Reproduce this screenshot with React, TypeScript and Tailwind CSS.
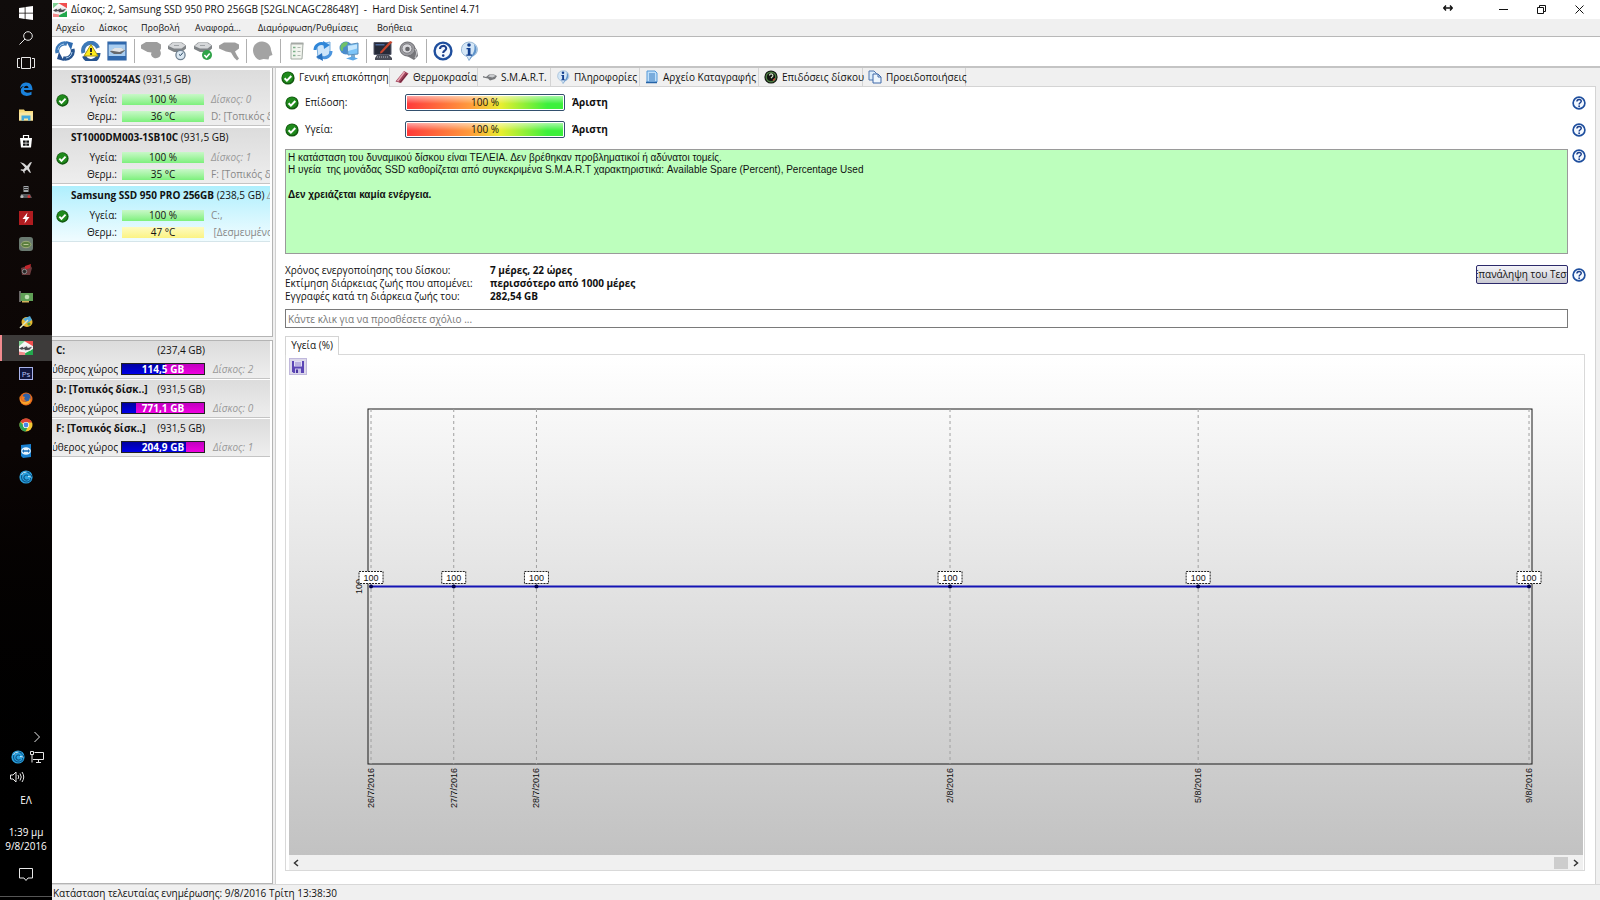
import React, { useState } from 'react';

interface IconProps {
  className?: string;
}

const CheckIcon: React.FC<IconProps> = ({ className = 'w-[14px] h-[14px]' }) => (
  <svg viewBox="0 0 14 14" className={`shrink-0 ${className}`}>
    <circle cx="7" cy="7" r="6.6" fill="#12590f" />
    <circle cx="6.8" cy="6.6" r="5.4" fill="#1f8a1c" />
    <path d="M3.6 7.2l2.3 2.4 4.4-4.6" fill="none" stroke="#fff" strokeWidth="2" />
  </svg>
);

const HelpIcon: React.FC<IconProps> = ({ className = 'w-[14px] h-[14px]' }) => (
  <svg viewBox="0 0 20 20" className={`shrink-0 ${className}`}>
    <circle cx="10" cy="10" r="8.4" fill="#f4f9ff" stroke="#1f4f9e" strokeWidth="2.4" />
    <path d="M7 8c0-4 6.2-4 6.2-.6 0 2.2-3 2.3-3 4.6" fill="none" stroke="#1b3f8c" strokeWidth="2.1" />
    <circle cx="10.2" cy="14.6" r="1.3" fill="#1b3f8c" />
  </svg>
);

const InfoIcon: React.FC<IconProps> = ({ className = 'w-5 h-5' }) => (
  <svg viewBox="0 0 20 20" className={`shrink-0 ${className}`}>
    <path d="M10 1a8.5 7.5 0 0 1 3 14.5L10 19.5l-2-4A8.5 7.5 0 0 1 10 1z" fill="#d4e6f6" stroke="#9ab9d6" />
    <path d="M15 3a7.5 7.5 0 0 1-2 12.5l-3 4c2-6 7-8 5-16.5z" fill="#5f93ca" />
    <circle cx="10" cy="4" r="1.8" fill="#123f8f" />
    <path d="M7.5 7h4v6.5h1.500v1.200H7.300v-1.200h1.500V8.200H7.500z" fill="#123f8f" />
  </svg>
);

const RefreshIcon: React.FC<IconProps> = ({ className = 'w-5 h-5' }) => (
  <svg viewBox="0 0 20 20" className={`shrink-0 ${className}`}>
    <path d="M2.500 12A7.500 7.500 0 0 1 12 2.800" fill="none" stroke="#3d79b8" strokeWidth="4" />
    <path d="M17.500 8A7.500 7.500 0 0 1 8 17.200" fill="none" stroke="#27548f" strokeWidth="4" />
    <path d="M11 0l7 2-2 7z" fill="#2d69ae" />
    <path d="M9 20l-7-2 2-7z" fill="#254f8d" />
    <path d="M3 9A7 7 0 0 1 9 3M17 11a7 7 0 0 1-6 6" fill="none" stroke="#a9cdec" />
  </svg>
);

const RefreshWarnIcon = () => (
  <svg viewBox="0 0 20 20" className="w-5 h-5">
    <path d="M2.500 12A7.500 7.500 0 0 1 17 7" fill="none" stroke="#3d79b8" strokeWidth="4" />
    <path d="M17.500 12A7.500 7.500 0 0 1 3 15" fill="none" stroke="#27548f" strokeWidth="4" />
    <path d="M10 3.500L17 15H3z" fill="#ffec1c" stroke="#a79418" />
    <path d="M10 7v4" stroke="#222" strokeWidth="2" />
    <circle cx="10" cy="13" r="1.100" fill="#222" />
  </svg>
);

const DiskWindowIcon = () => (
  <svg viewBox="0 0 20 20" className="w-5 h-5">
    <path d="M1 1h18v18H1z" fill="#a9cdf0" stroke="#2d5f9d" strokeWidth="1.200" />
    <path d="M1 1h18v2.500H1zM1 15h18v4H1z" fill="#2f68ad" />
    <path d="M3 10.500l4-3h8l3 2-4 3.500H7z" fill="#66696d" />
    <path d="M3.500 9.500l4-2.500h7l3 2-5 2z" fill="#e1e3e5" />
  </svg>
);

const DriveShape = () => (
  <>
    <path d="M1 5l4-3.500h10L19 4.500v3L15 11H7L1 8z" fill="#7f8386" />
    <path d="M1.500 5L5.500 2h9l4 2.500-4 3H7z" fill="#d5d7d9" />
    <path d="M7 4.500h5" stroke="#9fa3a6" />
  </>
);

const GreyDiskIcon = () => (
  <svg viewBox="0 0 20 20" className="w-5 h-5">
    <path d="M0 4l5-3h11l4 2.500v4l-1 2a5 5 0 1 1-9 4l.5-2-4-.5L0 7.500z" fill="#9d9d9d" />
  </svg>
);

const DiskClockIcon = () => (
  <svg viewBox="0 0 20 20" className="w-5 h-5">
    <DriveShape />
    <circle cx="13.500" cy="14" r="4.600" fill="#dbe8f2" stroke="#6f8191" strokeWidth="1.300" />
    <path d="M13.500 14.500l2.500-3M13.500 14.500l-1.500-1" stroke="#26435f" fill="none" />
  </svg>
);

const DiskCheckIcon = () => (
  <svg viewBox="0 0 20 20" className="w-5 h-5">
    <DriveShape />
    <circle cx="14" cy="14" r="5" fill="#2fa348" />
    <path d="M11.400 14l2 2.200 3.300-3.800" fill="none" stroke="#fff" strokeWidth="1.600" />
  </svg>
);

const GreyHammerIcon = () => (
  <svg viewBox="0 0 20 20" className="w-5 h-5">
    <path d="M0 4.500l5-3h11l4 2v4l-4 3 2 4 2 3-2 2-3-3-3-5-5-1-7-3z" fill="#9d9d9d" />
  </svg>
);

const GreyBlobIcon = () => (
  <svg viewBox="0 0 20 20" className="w-5 h-5">
    <path d="M9 .5c5 0 9 4 9 8.500l1.500 5-3 1-1 3.500-5-.5-4 1C2.500 17.500 0 13 0 9.500 0 4 4 .5 9 .5z" fill="#a3a3a3" />
  </svg>
);

const ReportIcon = () => (
  <svg viewBox="0 0 20 20" className="w-5 h-5">
    <path d="M4 2.500h12l-1 15.500H4z" fill="#f1f4ee" stroke="#a3aba3" />
    <path d="M4 1.500h12.500v2H4z" fill="#a5a9a5" />
    <path d="M6 6.500h2.500M6 10.500h2.500M6 14.500h2.500" stroke="#7db08a" strokeWidth="1.500" />
    <path d="M10.500 6.500h3M10.500 10.500h3M10.500 14.500h3" stroke="#b0b8b0" />
  </svg>
);

const ReportRefreshIcon = () => (
  <svg viewBox="0 0 20 20" className="w-5 h-5">
    <path d="M4 4l13-3v14L5 18z" fill="#cde5fa" stroke="#77aee0" />
    <path d="M2 9C2 4 7 1 12 3.500" fill="none" stroke="#2f86d8" strokeWidth="3" />
    <path d="M10 0l7 4-6 4z" fill="#2f86d8" />
    <path d="M18 10c0 5-5 8-9 6" fill="none" stroke="#4a94de" strokeWidth="3" />
    <path d="M10 20l-7-4 6-4z" fill="#2670c0" />
  </svg>
);

const NetworkIcon = () => (
  <svg viewBox="0 0 20 20" className="w-5 h-5">
    <circle cx="7" cy="7" r="6.500" fill="#4a8ccc" />
    <path d="M2 4c3-4 6-3 7-2-1 3-2 3-4 4s0 4-2 4c-2-1-2-4-1-6z" fill="#6ec06a" />
    <path d="M8 4l11-2v11l-10 1z" fill="#7cc4f8" stroke="#5a8db9" />
    <path d="M9 5l9-1.500v4L9 10z" fill="#c4e6fd" />
    <path d="M12 14h4v3h-4z" fill="#7fa9c9" />
    <path d="M7 17.500l6-2 6 2-5 2z" fill="#5ea8e6" />
  </svg>
);

const MonitorPenIcon = () => (
  <svg viewBox="0 0 20 20" className="w-5 h-5">
    <path d="M1 1.500h17v12H1z" fill="#262a38" stroke="#55596a" />
    <path d="M2 17l2-3h12l3 3v2H2z" fill="#4a4d58" />
    <path d="M4 16h11" stroke="#b7bac4" strokeDasharray="1 1" />
    <path d="M19.500 1L9 12l-2 .5.500-2L17 0z" fill="#c8452d" />
    <path d="M2.500 3h9v1.500h-9z" fill="#4d689b" />
  </svg>
);

const SpeakerIcon = () => (
  <svg viewBox="0 0 20 20" className="w-5 h-5">
    <path d="M13 3l5 6 1 6-4 4-7-4z" fill="#77777b" />
    <ellipse cx="8.500" cy="8" rx="7.500" ry="7" fill="#9b9ba0" stroke="#6c6c70" />
    <ellipse cx="8" cy="7.500" rx="5" ry="4.700" fill="#d8d8dc" stroke="#808084" />
    <circle cx="8.500" cy="8" r="2.300" fill="#66666a" />
    <path d="M16 8c2 3 2 5 0 9" fill="none" stroke="#d2d2d6" />
  </svg>
);

const SentinelIcon: React.FC<IconProps> = ({ className = 'w-[14px] h-[14px]' }) => (
  <svg viewBox="0 0 16 16" className={`shrink-0 ${className}`}>
    <path d="M0 0h16v16H0z" fill="#f7f7f7" />
    <path d="M0 0h7L0 6z" fill="#7fd093" />
    <path d="M6 0h10v6z" fill="#f04e4e" />
    <path d="M0 12l7 1v3H0z" fill="#f28c8c" />
    <path d="M7 14l9-5v7H7z" fill="#23a84d" />
    <path d="M0 8l5-3h8l3 2-3 4-6 1-6-2z" fill="#e9e9ea" />
    <path d="M0 8.500l4-2 1 1.500 4-2 1 2 5-1.500-3 3.500-5 .5-1-1.500-3 1z" fill="#4b4b4f" />
  </svg>
);

const ThermoIcon = () => (
  <svg viewBox="0 0 14 14" className="w-[14px] h-[14px] shrink-0">
    <path d="M9 1l4.500 2.500L6 13 .5 11.500z" fill="#a04058" />
    <path d="M9.500 2L2.500 11.300" stroke="#e8a8b5" strokeWidth="1.500" />
    <path d="M12 4L5 12.500" stroke="#632438" />
  </svg>
);

const SmartIcon = () => (
  <svg viewBox="0 0 14 14" className="w-[14px] h-[14px] shrink-0">
    <path d="M0 6l3 1 3-2.500h5L14 6l-2 3-5 1.500L5 8.500 0 7.500z" fill="#77797c" />
    <path d="M5 6.500L7 5h4l1.500 1-3 1.500z" fill="#c9cbce" />
  </svg>
);

const LogIcon = () => (
  <svg viewBox="0 0 14 14" className="w-[14px] h-[14px] shrink-0">
    <path d="M2 1h8l2 2v9H2z" fill="#bfe0fb" stroke="#5598d8" />
    <path d="M4 4h6M4 6h6M4 8h6M4 10h6" stroke="#3578bd" />
    <path d="M1 12.500h11" stroke="#2563a5" strokeWidth="1.500" />
  </svg>
);

const GaugeIcon = () => (
  <svg viewBox="0 0 14 14" className="w-[14px] h-[14px] shrink-0">
    <circle cx="7" cy="7" r="6.600" fill="#101410" />
    <circle cx="7" cy="7" r="4.800" fill="none" stroke="#4d7d42" strokeWidth="1.400" />
    <path d="M5.500 5.500a1.700 1.700 0 1 1 2.500 1.500L7 8" fill="none" stroke="#d6e4cb" strokeWidth="1.200" />
    <path d="M9 10.500l2-2" stroke="#d64d3d" strokeWidth="1.200" />
  </svg>
);

const CopyIcon = () => (
  <svg viewBox="0 0 14 14" className="w-[14px] h-[14px] shrink-0">
    <path d="M1 1h5l2.500 2.500V10H1z" fill="#dcecfa" stroke="#4f76b0" />
    <path d="M5 4h5l3 3v6H5z" fill="#eef6fd" stroke="#3f69a8" />
    <path d="M10 4v3h3" fill="none" stroke="#3f69a8" />
  </svg>
);

const FloppyIcon = () => (
  <svg viewBox="0 0 14 14" className="w-[14px] h-[14px]">
    <path d="M1 1h12v12H2.500L1 11.500z" fill="#5b45b5" />
    <path d="M3 1h8v5.500H3z" fill="#e2def4" />
    <path d="M4 3h6M4 5h6" stroke="#9183cc" />
    <path d="M4 8.500h6V13H4z" fill="#c9c2e8" />
    <path d="M5 9.500h2V13H5z" fill="#4a36a0" />
  </svg>
);

const SwirlIcon = () => (
  <svg viewBox="0 0 14 14" className="w-[14px] h-[14px]">
    <circle cx="7" cy="7" r="6.600" fill="#2ba3e0" />
    <path d="M10.500 3A5 5 0 1 0 11.500 10M9 5.500a2.500 2.500 0 1 0 .5 3.500" fill="none" stroke="#0c5488" strokeWidth="1.100" />
    <path d="M9.500 3l3.500 3-2 1L12 10" fill="none" stroke="#0c5488" />
    <path d="M2.500 5a5 5 0 0 1 5-3M9 6.500l3 .5" fill="none" stroke="#c8ecff" />
  </svg>
);

const taskbarApps = [
  {
    label: 'Edge',
    art: <path d="M1 6.500C1.500 2.500 4 .5 7.300.5 11.500.5 13.500 3.500 13.500 8H5c0 3 4.500 3.500 7.500 1.800v3C8 15 1.800 14 1.800 8.800c0-2.500 1.600-4 3.500-4.800C3.500 4 2 5 1 6.500zM5 6h4.500C9.500 3.200 5.500 3 5 6z" fill="#1a82dc" fillRule="evenodd" />,
  },
  {
    label: 'Explorer',
    art: (
      <>
        <path d="M0 1.500h5l1 1.500h8v9.500H0z" fill="#f7d978" />
        <path d="M0 4.500h14v8H0z" fill="#fbe6a0" />
        <path d="M2.500 12.500V7.500h9v5H9v-2H5v2z" fill="#45a9dc" />
      </>
    ),
  },
  {
    label: 'Store',
    art: (
      <>
        <path d="M1 4h12l-1 9.500H2z" fill="#fff" />
        <path d="M4.500 4V1.500h5V4" fill="none" stroke="#fff" strokeWidth="1.200" />
        <path d="M4 6.500h2.700v2.300H4zM7.300 6.500H10v2.300H7.300zM4 9.400h2.700v2.300H4zM7.300 9.400H10v2.300H7.300z" fill="#111" />
      </>
    ),
  },
  { label: 'Plane', art: <path d="M1 2l4 1.500L8 6l3-3.500 2-.5-1.500 3L10 8l2 5-1.500-.5L8 9.500l-2.500 2 .3 2-1-.5-1-2-2.300-.8.5-1 2.300.3L6 7.500z" fill="#d8d8d8" /> },
  {
    label: 'Joystick',
    art: (
      <>
        <path d="M4.500 1h5v6h-5z" fill="#a2a6aa" />
        <path d="M5 2.500h4M5 4.500h4" stroke="#2b2b2b" />
        <path d="M2 9h9l2 4H1z" fill="#55585c" />
        <circle cx="3" cy="11.500" r="1.500" fill="#bbb" />
        <circle cx="10" cy="11.500" r="1.500" fill="#d43434" />
      </>
    ),
  },
  {
    label: 'Flash',
    art: (
      <>
        <path d="M0 0h14v14H0z" fill="#b01c20" />
        <path d="M8.500 1.500L3.500 8h3L5.500 12.500l5-6.500h-3z" fill="#fff" />
      </>
    ),
  },
  {
    label: 'Turtle',
    art: (
      <>
        <rect width="14" height="14" rx="3" fill="#6a7a70" />
        <ellipse cx="7" cy="7.500" rx="5" ry="3.200" fill="#5c7f3f" stroke="#9dab78" />
        <path d="M4.500 7.500h5" stroke="#b9c596" />
      </>
    ),
  },
  {
    label: 'Tuner',
    art: (
      <>
        <path d="M2 5l9-3 2 3-2 7H3z" fill="#6b3a3c" />
        <path d="M6 3l6-2-1 4-5 2z" fill="#c2262c" />
        <circle cx="5.500" cy="8.500" r="2.200" fill="#262626" stroke="#8d8d8d" />
      </>
    ),
  },
  {
    label: 'Graphics card',
    art: (
      <>
        <path d="M1 2v11" stroke="#c9c9c9" />
        <path d="M1.500 4H14v8H1.500z" fill="#5f9f55" />
        <circle cx="8" cy="8" r="2.300" fill="#bfe0b4" />
        <path d="M3 12h7v1.500H3z" fill="#d3b45c" />
      </>
    ),
  },
  {
    label: 'Paint',
    art: (
      <>
        <ellipse cx="8" cy="7" rx="5.500" ry="5" fill="#e7b932" />
        <path d="M4 4l7-3 2 4-5 3z" fill="#52a9d8" />
        <path d="M1 13L9 5" stroke="#dbe9c4" strokeWidth="1.500" />
        <circle cx="10" cy="9" r="1.600" fill="#4f9d3b" />
      </>
    ),
  },
  { label: 'Hard Disk Sentinel', art: null },
  { label: 'Photoshop', art: null },
  {
    label: 'Firefox',
    art: (
      <>
        <circle cx="7" cy="7" r="6.500" fill="#e66a1c" />
        <circle cx="7.500" cy="5.500" r="4" fill="#2f62a8" />
        <path d="M1 4c0 6 4 7 7 5.500 2-.5 3-2 2.500-3.500 2 2 1 5.500-3.500 6.500C2 12.500 0 8 1 4z" fill="#f7a52a" />
        <path d="M3 4l3 1-1 2 2 1.500c-3 1-5-1-4-4.500z" fill="#ee7b22" />
      </>
    ),
  },
  {
    label: 'Chrome',
    art: (
      <>
        <circle cx="7" cy="7" r="6.500" fill="#f3c633" />
        <path d="M7 7L1.300 3.800A6.500 6.500 0 0 1 13 4.500H7z" fill="#dc4437" />
        <path d="M1.300 3.800A6.500 6.500 0 0 0 6.500 13.500L9 8.500 5 8z" fill="#2da258" />
        <circle cx="7" cy="7" r="3.100" fill="#fff" />
        <circle cx="7" cy="7" r="2.400" fill="#4886e8" />
      </>
    ),
  },
  {
    label: 'TeamViewer',
    art: (
      <>
        <path d="M2 1l10-1v13l-8 1-2-2z" fill="#1a80d0" />
        <ellipse cx="7" cy="7" rx="4.800" ry="3.800" fill="#e8f4fd" />
        <path d="M3 7l2-2v1.200h4V5l2 2-2 2V7.800H5V9z" fill="#1569b4" />
      </>
    ),
  },
  { label: 'Browser', art: null },
];

const Taskbar: React.FC = () => (
  <nav aria-label="Taskbar" className="w-[52px] shrink-0 flex flex-col bg-linear-to-b from-[#100c0b] via-[#0b0504] to-black text-white">
    <button aria-label="Start" className="h-[25px] shrink-0 flex items-center justify-center">
      <svg viewBox="0 0 14 14" className="w-[14px] h-[14px]" fill="#fff">
        <path d="M0 2l5.700-.8v5.500H0zM6.500 1.100L14 0v6.700H6.500zM0 7.400h5.700v5.500L0 12.100zM6.500 7.400H14V14l-7.500-1z" />
      </svg>
    </button>
    <button aria-label="Search" className="h-[25px] shrink-0 flex items-center justify-center">
      <svg viewBox="0 0 14 14" className="w-[14px] h-[14px]" fill="none" stroke="#e8e8e8">
        <circle cx="9" cy="5" r="4.300" />
        <path d="M6 8L.5 13.500" />
      </svg>
    </button>
    <button aria-label="Task view" className="h-[26px] shrink-0 flex items-center justify-center">
      <svg viewBox="0 0 18 12" className="w-[18px] h-3" fill="none" stroke="#e8e8e8">
        <path d="M4.500 .5h9v11h-9zM3 1.500H.5v9H3M15 1.500h2.500v9H15" />
      </svg>
    </button>
    <div className="h-[414px] shrink-0 flex flex-col">
      {taskbarApps.map(({ label, art }) => (
        <button
          key={label}
          aria-label={label}
          className={`flex-1 flex items-center justify-center border-l-2 pr-[2px] ${
            label === 'Hard Disk Sentinel' ? 'bg-[#3d3b3a] border-[#f08a8e]' : 'border-transparent'
          }`}
        >
          {label === 'Hard Disk Sentinel' && <SentinelIcon />}
          {label === 'Photoshop' && (
            <span className="w-[14px] h-[13px] flex items-center justify-center border border-[#a9b3ea] bg-[#10153f] text-[8px] leading-none text-[#b7c1f5]">Ps</span>
          )}
          {label === 'Browser' && <SwirlIcon />}
          {art && <svg viewBox="0 0 14 14" className="w-[14px] h-[14px]">{art}</svg>}
        </button>
      ))}
    </div>
    <div className="flex-1" />
    <div className="flex flex-col shrink-0">
      <button aria-label="Hidden icons" className="h-5 flex items-center justify-end pr-3">
        <svg viewBox="0 0 6 12" className="w-[6px] h-3" fill="none" stroke="#e8e8e8"><path d="M.5 1l5 5-5 5" /></svg>
      </button>
      <div className="h-5 flex items-center justify-between pl-[11px] pr-2">
        <SwirlIcon />
        <svg viewBox="0 0 14 12" className="w-[14px] h-3" fill="none" stroke="#e8e8e8">
          <path d="M4.500 1.500h9v7H3M.5 .5h3v3h-3zM2 3.500v8M6 11.500h5M8.500 8.500v3" />
        </svg>
      </div>
      <div className="h-5 flex items-center pl-[10px]">
        <svg viewBox="0 0 15 12" className="w-[15px] h-3" fill="none" stroke="#e8e8e8">
          <path d="M.5 4h2.500l3-3v10L3 8H.5zM8 4q1.500 2 0 4M10 2.500q2.500 3.500 0 7M12 1q3.500 5 0 10" />
        </svg>
      </div>
      <div className="h-[27px] text-[10px] leading-[27px] text-center">ΕΛ</div>
      <div className="pt-[11px] text-[10px] leading-[14px] text-center">
        <div>1:39 μμ</div>
        <div>9/8/2016</div>
      </div>
      <button aria-label="Notifications" className="h-[43px] flex items-center justify-center">
        <svg viewBox="0 0 14 13" className="w-[14px] h-[13px]" fill="none" stroke="#e8e8e8">
          <path d="M.5 .5h13v9.500H9L7 12.500 5 10H.5z" />
        </svg>
      </button>
      <div className="h-1 border-t border-[#555]" />
    </div>
  </nav>
);

const disks = [
  { name: 'ST31000524AS', size: '(931,5 GB)', temp: '36 °C', warm: false, index: 'Δίσκος: 0', mount: 'D: [Τοπικός δί' },
  { name: 'ST1000DM003-1SB10C', size: '(931,5 GB)', temp: '35 °C', warm: false, index: 'Δίσκος: 1', mount: 'F: [Τοπικός δί' },
  { name: 'Samsung SSD 950 PRO 256GB', size: '(238,5 GB)', temp: '47 °C', warm: true, index: 'C:,', mount: '\u00a0[Δεσμευμένο', selected: true },
];

const partitions = [
  { name: 'C:', size: '(237,4 GB)', free: '114,5 GB', used: 52, disk: 'Δίσκος: 2' },
  { name: 'D: [Τοπικός δίσκ..]', size: '(931,5 GB)', free: '771,1 GB', used: 17, disk: 'Δίσκος: 0' },
  { name: 'F: [Τοπικός δίσκ..]', size: '(931,5 GB)', free: '204,9 GB', used: 78, disk: 'Δίσκος: 1' },
];

const greenBar = 'bg-linear-to-b from-[#c8f8c8] to-[#7cf07c]';
const yellowBar = 'bg-linear-to-b from-[#fdfbc0] to-[#fbf383]';

const Sidebar: React.FC = () => (
  <aside className="w-[221px] shrink-0 flex flex-col gap-[3px]">
    <div className="h-[269px] shrink-0 bg-white border-r border-b border-[#b4b4b4] pr-[2px] pt-[2px]">
      {disks.map((disk) => (
        <button
          key={disk.name}
          className={`w-full h-14 mb-[2px] pl-1 pt-px block text-left overflow-hidden whitespace-nowrap border-b ${
            disk.selected
              ? 'bg-linear-to-b from-[#aeeffd] to-[#f0fcff] border-[#d5e5ea]'
              : 'bg-linear-to-b from-[#dcdcdc] to-[#eeeeee] border-[#c4c4c4]'
          }`}
        >
          <div className="pl-[15px] leading-[15px]">
            <b>{disk.name}</b> {disk.size}
            {disk.selected && <i className="text-[#999]">&nbsp;Δί</i>}
          </div>
          <div className="flex items-start pt-1">
            <CheckIcon className="w-[13px] h-[13px] mt-[3px]" />
            <div className="flex-1 min-w-0 pl-[3px]">
              <div className="flex items-center h-[17px]">
                <span className="w-[45px] text-right shrink-0">Υγεία:</span>
                <span className={`w-[82px] h-[11px] leading-[11px] ml-[5px] mr-[7px] text-center shrink-0 ${greenBar}`}>100 %</span>
                <span className={disk.selected ? 'text-[#888]' : 'text-[#999] italic'}>{disk.index}</span>
              </div>
              <div className="flex items-center h-[17px]">
                <span className="w-[45px] text-right shrink-0">Θερμ.:</span>
                <span className={`w-[82px] h-[11px] leading-[11px] ml-[5px] mr-[7px] text-center shrink-0 ${disk.warm ? yellowBar : greenBar}`}>{disk.temp}</span>
                <span className="text-[#888]">{disk.mount}</span>
              </div>
            </div>
          </div>
        </button>
      ))}
    </div>
    <div className="flex-1 bg-white border-t border-r border-b border-[#b4b4b4] pr-[2px]">
      {partitions.map((part) => (
        <button
          key={part.name}
          className="w-full h-[38px] mb-px pl-px block text-left overflow-hidden whitespace-nowrap bg-linear-to-b from-[#dcdcdc] to-[#eeeeee] border-b border-[#c4c4c4]"
        >
          <div className="w-[152px] pl-[3px] h-[19px] flex items-center justify-between">
            <b>{part.name}</b>
            <span>{part.size}</span>
          </div>
          <div className="flex items-center h-[18px]">
            <span className="w-[65px] shrink-0 overflow-hidden flex justify-end">Ελεύθερος χώρος</span>
            <span className="w-[84px] h-3 ml-[3px] mr-2 shrink-0 relative border border-[#222] bg-linear-to-b from-[#c000c0] to-[#f000e0]">
              <span className="block h-full bg-linear-to-b from-[#0000a0] to-[#0000e8]" style={{ width: `${part.used}%` }} />
              <b className="absolute inset-0 text-center text-white leading-[11px]">{part.free}</b>
            </span>
            <i className="text-[#999]">{part.disk}</i>
          </div>
        </button>
      ))}
    </div>
  </aside>
);

const menuItems = [
  { label: 'Αρχείο', className: 'w-[43px]' },
  { label: 'Δίσκος', className: 'w-[42px]' },
  { label: 'Προβολή', className: 'w-[54px]' },
  { label: 'Αναφορά…', className: 'w-[63px]' },
  { label: 'Διαμόρφωση/Ρυθμίσεις', className: 'w-[119px]' },
  { label: 'Βοήθεια', className: 'w-[60px]' },
];

const toolGroups = [
  [
    { label: 'Refresh', icon: <RefreshIcon /> },
    { label: 'Refresh warnings', icon: <RefreshWarnIcon /> },
    { label: 'Disk view', icon: <DiskWindowIcon /> },
  ],
  [
    { label: 'Short test', icon: <GreyDiskIcon /> },
    { label: 'Extended test', icon: <DiskClockIcon /> },
    { label: 'Surface test', icon: <DiskCheckIcon /> },
    { label: 'Repair', icon: <GreyHammerIcon /> },
  ],
  [{ label: 'Acoustic', icon: <GreyBlobIcon /> }],
  [
    { label: 'Report', icon: <ReportIcon /> },
    { label: 'Send report', icon: <ReportRefreshIcon /> },
    { label: 'Network', icon: <NetworkIcon /> },
  ],
  [
    { label: 'Configuration', icon: <MonitorPenIcon /> },
    { label: 'Sound', icon: <SpeakerIcon /> },
  ],
  [
    { label: 'Help', icon: <HelpIcon className="w-5 h-5" /> },
    { label: 'About', icon: <InfoIcon /> },
  ],
];

const tabs = [
  { label: 'Γενική επισκόπηση', icon: <CheckIcon />, className: 'w-[114px]' },
  { label: 'Θερμοκρασία', icon: <ThermoIcon />, className: 'w-[88px]' },
  { label: 'S.M.A.R.T.', icon: <SmartIcon />, className: 'w-[73px]' },
  { label: 'Πληροφορίες', icon: <InfoIcon className="w-[14px] h-[14px]" />, className: 'w-[89px]' },
  { label: 'Αρχείο Καταγραφής', icon: <LogIcon />, className: 'w-[119px]' },
  { label: 'Επιδόσεις δίσκου', icon: <GaugeIcon />, className: 'w-[104px]' },
  { label: 'Προειδοποιήσεις', icon: <CopyIcon />, className: 'w-[103px]' },
];

const HelpButton = () => (
  <button aria-label="Βοήθεια" className="shrink-0">
    <HelpIcon className="w-[14px] h-[14px] block" />
  </button>
);

const Meter: React.FC<{ label: string }> = ({ label }) => (
  <div className="h-[27px] flex items-center">
    <CheckIcon />
    <span className="w-[106px] pl-[6px]">{label}</span>
    <div className="w-[160px] h-[17px] p-px rounded-xs border border-[#33506e] bg-white">
      <div className="h-full bg-[linear-gradient(to_bottom,rgba(255,255,255,0.55),rgba(255,255,255,0)_60%),linear-gradient(to_right,#ff3a3a,#ff9a3c_40%,#e8ee30_60%,#3cf03c_90%)] text-center leading-[13px]">
        100 %
      </div>
    </div>
    <b className="pl-[7px]">Άριστη</b>
    <div className="flex-1" />
    <HelpButton />
  </div>
);

// day = offset from the first sample
const samples = [
  { day: 0, date: '26/7/2016', value: 100 },
  { day: 1, date: '27/7/2016', value: 100 },
  { day: 2, date: '28/7/2016', value: 100 },
  { day: 7, date: '2/8/2016', value: 100 },
  { day: 10, date: '5/8/2016', value: 100 },
  { day: 14, date: '9/8/2016', value: 100 },
];

const dayToPercent = (day: number) => `${0.26 + day * 7.106}%`;

const HealthChart: React.FC = () => (
  <svg className="flex-1 min-h-0 w-full overflow-visible font-['Liberation_Sans',sans-serif] text-[9px]">
    <rect width="100%" height="100%" fill="none" stroke="#1a1a1a" />
    {samples.map(({ day, date }) => (
      <g key={date}>
        <line x1={dayToPercent(day)} x2={dayToPercent(day)} y1="0" y2="100%" stroke="#a0a0a0" strokeDasharray="3 3" />
        <svg x={dayToPercent(day)} y="100%" className="overflow-visible">
          <text transform="translate(3 4) rotate(-90)" textAnchor="end" fill="#111">{date}</text>
        </svg>
      </g>
    ))}
    <svg x="0" y="50%" className="overflow-visible">
      <text transform="translate(-6 0) rotate(-90)" textAnchor="middle" fill="#111">100</text>
    </svg>
    <line x1={dayToPercent(0)} x2={dayToPercent(14)} y1="50%" y2="50%" stroke="#1414b4" strokeWidth="2" />
    {samples.map(({ day, value }) => (
      <svg key={day} x={dayToPercent(day)} y="50%" className="overflow-visible">
        <circle r="2" fill="#000050" />
        <rect x="-12" y="-15" width="24" height="12" fill="#fff" stroke="#222" strokeDasharray="2 1" />
        <text y="-6" textAnchor="middle" fill="#111">{value}</text>
      </svg>
    ))}
  </svg>
);

const Overview: React.FC = () => {
  const [comment, setComment] = useState('');

  return (
    <main className="flex-1 min-h-0 flex flex-col bg-white border-t border-r border-[#d4d4d4] mr-1 pl-[9px] pr-[9px] pb-[13px]">
      <div className="pt-[2px]">
        <Meter label="Επίδοση:" />
        <Meter label="Υγεία:" />
      </div>
      <div className="flex items-start gap-1 mt-[6px]">
        <div className="flex-1 h-[105px] p-[2px] bg-[#bdffbd] border border-[#9a9a9a] font-['Liberation_Sans',sans-serif] text-[10px] leading-3">
          <p>Η κατάσταση του δυναμικού δίσκου είναι ΤΕΛΕΙΑ. Δεν βρέθηκαν προβληματικοί ή αδύνατοι τομείς.</p>
          <p className="whitespace-pre">Η υγεία  της μονάδας SSD καθορίζεται από συγκεκριμένα S.M.A.R.T χαρακτηριστικά: Available Spare (Percent), Percentage Used</p>
          <p className="pt-[13px] font-bold">Δεν χρειάζεται καμία ενέργεια.</p>
        </div>
        <HelpButton />
      </div>
      <div className="flex items-start pt-[10px]">
        <dl className="grid grid-cols-[205px_auto] leading-[13px]">
          <dt>Χρόνος ενεργοποίησης του δίσκου:</dt>
          <dd className="font-bold">7 μέρες, 22 ώρες</dd>
          <dt>Εκτίμηση διάρκειας ζωής που απομένει:</dt>
          <dd className="font-bold">περισσότερο από 1000 μέρες</dd>
          <dt>Εγγραφές κατά τη διάρκεια ζωής του:</dt>
          <dd className="font-bold">282,54 GB</dd>
        </dl>
        <div className="flex-1" />
        <div className="flex items-center gap-1 pt-px">
          <button className="w-[92px] h-[19px] flex items-center justify-center overflow-hidden whitespace-nowrap rounded-xs border border-[#2c2a6b] bg-linear-to-b from-[#f4f4f8] to-[#c9c9d2]">
            <span>Επανάληψη του Τεστ</span>
          </button>
          <HelpButton />
        </div>
      </div>
      <input
        aria-label="Σχόλιο"
        className="h-[19px] mt-[6px] mr-[18px] px-[2px] border border-[#7a7a7a] bg-white placeholder:text-[#777]"
        placeholder="Κάντε κλικ για να προσθέσετε σχόλιο ..."
        value={comment}
        onChange={(e) => setComment(e.target.value)}
      />
      <button className="self-start w-[54px] h-[19px] mt-2 -mb-px pb-[2px] z-10 bg-white border border-b-0 border-[#d4d4d4]">Υγεία (%)</button>
      <section className="flex-1 min-h-0 flex flex-col border border-[#d9d9d9] mr-px p-[3px] pr-px pb-0">
        <div className="flex-1 min-h-0 flex flex-col bg-linear-to-b from-white to-[#c2c2c2]">
          <div className="h-[51px] shrink-0">
            <button aria-label="Save" className="w-[18px] h-[17px] flex items-center justify-center border border-[#c0b8dc] bg-[#dcd8ea]">
              <FloppyIcon />
            </button>
          </div>
          <div className="flex-1 min-h-0 flex flex-col pl-[79px] pr-[51px] pb-[91px]">
            <HealthChart />
          </div>
        </div>
        <div className="h-[15px] shrink-0 flex items-center justify-between bg-[#f0f0f0]">
          <button aria-label="Scroll left" className="w-[14px] h-full flex items-center justify-center">
            <svg viewBox="0 0 6 8" className="w-[6px] h-2" fill="none" stroke="#333" strokeWidth="1.500"><path d="M5 1L1.500 4 5 7" /></svg>
          </button>
          <div className="flex-1" />
          <div className="w-[14px] h-3 bg-[#cdcdcd]" />
          <button aria-label="Scroll right" className="w-[15px] h-full flex items-center justify-center">
            <svg viewBox="0 0 6 8" className="w-[6px] h-2" fill="none" stroke="#333" strokeWidth="1.500"><path d="M1 1l3.500 3L1 7" /></svg>
          </button>
        </div>
      </section>
    </main>
  );
};

const App: React.FC = () => {
  const [activeTab, setActiveTab] = useState(tabs[0].label);

  return (
    <div className="h-screen flex overflow-hidden bg-[#f0f0f0] font-['Open_Sans','Noto_Sans',sans-serif] text-[10px] text-[#111]">
      <Taskbar />
      <div className="flex-1 min-w-0 flex flex-col">
        {/* Title bar */}
        <header className="h-[19px] shrink-0 flex items-center bg-white pl-[1px]">
          <SentinelIcon />
          <h1 className="pl-1 flex-1 whitespace-pre">{'Δίσκος: 2, Samsung SSD 950 PRO 256GB [S2GLNCAGC28648Y]  -  Hard Disk Sentinel 4.71'}</h1>
          <svg viewBox="0 0 10 8" className="w-[10px] h-2 mr-[31px] mb-1" fill="none" stroke="#111" strokeWidth="1.400">
            <path d="M1 4h8M3 1.500L.8 4 3 6.500M7 1.500L9.200 4 7 6.500" />
          </svg>
          <button aria-label="Minimize" className="w-[38px] flex justify-center">
            <svg viewBox="0 0 9 9" className="w-[9px] h-[9px]" stroke="#111"><path d="M0 4.500h9" /></svg>
          </button>
          <button aria-label="Restore" className="w-[38px] flex justify-center">
            <svg viewBox="0 0 9 9" className="w-[9px] h-[9px]" fill="none" stroke="#111"><path d="M.5 2.500h6v6h-6zM2.500 2.500v-2h6v6h-2" /></svg>
          </button>
          <button aria-label="Close" className="w-[38px] flex justify-center mr-[2px]">
            <svg viewBox="0 0 9 9" className="w-[9px] h-[9px]" stroke="#111"><path d="M.5 .5l8 8M8.500 .5l-8 8" /></svg>
          </button>
        </header>

        {/* Menu */}
        <nav className="h-[18px] shrink-0 flex items-center pl-1 text-[9px] border-b border-[#b8b8b8]">
          {menuItems.map(({ label, className }) => (
            <button key={label} className={`text-left whitespace-nowrap ${className}`}>{label}</button>
          ))}
        </nav>

        {/* Toolbar */}
        <div className="h-[31px] shrink-0 flex items-center pb-[2px] bg-white border-b-2 border-[#c4c4c4]">
          {toolGroups.map((group, i) => (
            <div key={i} className="flex items-center">
              {i > 0 && <div className="w-px h-6 ml-1 mr-[3px] bg-[#b0b0b0]" />}
              {group.map(({ label, icon }) => (
                <button key={label} aria-label={label} className="w-[26px] h-6 flex items-center justify-center">{icon}</button>
              ))}
            </div>
          ))}
        </div>

        <div className="flex-1 min-h-0 flex">
          <Sidebar />
          <div className="flex-1 min-w-0 flex flex-col ml-[2px] border-l border-[#d0d0d0]">
            <div role="tablist" className="h-[18px] shrink-0 flex">
              {tabs.map(({ label, icon, className }) => (
                <button
                  key={label}
                  role="tab"
                  aria-selected={activeTab === label}
                  onClick={() => setActiveTab(label)}
                  className={`shrink-0 flex items-center gap-1 pl-[5px] whitespace-nowrap border-r border-[#d4d4d4] ${className} ${
                    activeTab === label ? 'bg-white -mb-px z-10' : ''
                  }`}
                >
                  {icon}
                  {label}
                </button>
              ))}
            </div>
            <Overview />
          </div>
        </div>

        <footer className="h-4 shrink-0 pl-px leading-[16px] border-t border-[#d8d8d8]">
          Κατάσταση τελευταίας ενημέρωσης: 9/8/2016 Τρίτη 13:38:30
        </footer>
      </div>
    </div>
  );
};

export default App;
